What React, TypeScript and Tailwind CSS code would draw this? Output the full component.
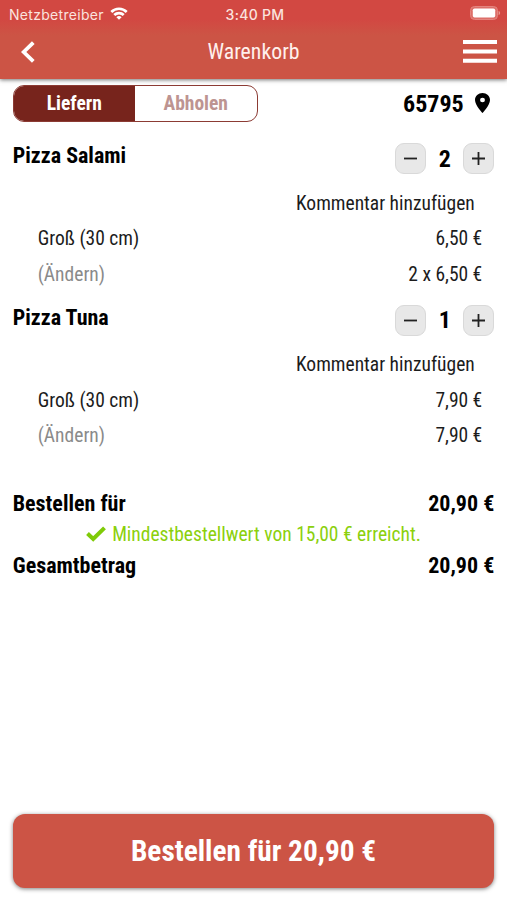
interface CartItem {
  name: string;
  count: number;
  size: string;
  price: string;
  total: string;
}

const items: CartItem[] = [
  { name: 'Pizza Salami', count: 2, size: 'Groß (30 cm)', price: '6,50 €', total: '2 x 6,50 €' },
  { name: 'Pizza Tuna', count: 1, size: 'Groß (30 cm)', price: '7,90 €', total: '7,90 €' },
];

function StatusBar() {
  return (
    <div className="grid grid-cols-3 items-center h-[27px] pl-[9px] pr-[6px] font-['Inter',sans-serif] font-stretch-normal text-[14px] text-[#fbe3df]">
      <div className="flex items-center gap-[6px]">
        <span className="tracking-[0.3px] pt-[1px]">Netzbetreiber</span>
        <svg className="w-[18px] h-[13px] mb-[1px] shrink-0" viewBox="0 0 19 14" fill="none" stroke="white" strokeWidth={2.9}>
          <path d="M1.2 5.3a11.8 11.8 0 0 1 16.6 0" />
          <path d="M4.4 8.7a7.3 7.3 0 0 1 10.2 0" />
          <path d="M9.5 13.8 6.7 11a4 4 0 0 1 5.6 0z" fill="white" stroke="none" />
        </svg>
      </div>
      <span className="text-center font-medium tracking-[0.3px] pt-[1px]">3:40 PM</span>
      <svg className="w-[31px] h-[14px] mb-[1px] justify-self-end" viewBox="0 0 31 14">
        <rect x="0.5" y="0.5" width="27" height="13" rx="4" fill="#dd6f69" stroke="#e4857f" />
        <rect x="2.8" y="2.5" width="22.4" height="9" rx="1.8" fill="white" />
        <path d="M28.6 4.8c2 .8 2 3.6 0 4.4z" fill="#e79c95" />
      </svg>
    </div>
  );
}

function Stepper({ count }: { count: number }) {
  const button = 'flex items-center justify-center w-[31px] h-[31px] rounded-[9px] bg-[#e8e8e8] border border-[#d9d9d9]';
  return (
    <div className="flex items-center">
      <button className={button}>
        <svg className="w-[13px] h-[13px]" viewBox="0 0 13 13" stroke="#222" strokeWidth={1.8}>
          <path d="M0 6.5h13" />
        </svg>
      </button>
      <span className="w-[37px] text-center text-[24px] font-bold">{count}</span>
      <button className={button}>
        <svg className="w-[13px] h-[13px]" viewBox="0 0 13 13" stroke="#222" strokeWidth={1.8}>
          <path d="M0 6.5h13M6.5 0v13" />
        </svg>
      </button>
    </div>
  );
}

function CartEntry({ item }: { item: CartItem }) {
  return (
    <div className="h-[161.5px]">
      <div className="flex justify-between h-[31px]">
        <h2 className="text-[22px] leading-[26px] font-bold">{item.name}</h2>
        <Stepper count={item.count} />
      </div>
      <div className="mt-[11.5px] pl-[25px] pr-[12px] text-[19.5px] leading-[35.5px] text-[#1c1c1c]">
        <div className="text-right pr-[7.5px]">Kommentar hinzufügen</div>
        <div className="flex justify-between">
          <span>{item.size}</span>
          <span>{item.price}</span>
        </div>
        <div className="flex justify-between">
          <span className="text-[#8a8a8a]">(Ändern)</span>
          <span>{item.total}</span>
        </div>
      </div>
    </div>
  );
}

export default function App() {
  return (
    <div className="flex flex-col w-full h-[900px] bg-white text-black font-['Roboto_Condensed','Roboto',sans-serif] font-stretch-condensed">
      <header className="h-[79px] shrink-0 bg-linear-to-b from-[#d24842] from-25% to-[#cc5445] to-45% shadow-[0_1px_4px_rgba(0,0,0,0.55)]">
        <StatusBar />
        <div className="flex items-center justify-between h-[49px] pl-[21px] pr-[10px] text-white">
          <svg className="w-[14px] h-[22px]" viewBox="0 0 14 22" fill="none" stroke="white" strokeWidth={3.8}>
            <path d="M12.3 1.6 2.7 11l9.6 9.4" />
          </svg>
          <h1 className="pl-[9px] pt-[2px] text-[21.8px] text-[#fff0ec]">Warenkorb</h1>
          <svg className="w-[34px] h-[23px]" viewBox="0 0 34 23" fill="white">
            <path d="M0 0h34v4H0zM0 9.5h34v4H0zM0 18.7h34v4H0z" />
          </svg>
        </div>
      </header>

      <main className="flex flex-col flex-1 px-[12.75px] pt-[6px]">
        <div className="flex items-center justify-between h-[37px]">
          <div className="flex w-[245px] h-[37px] rounded-[11px] border border-[#8c3b34] overflow-hidden text-[19.5px] font-bold">
            <button className="w-[121px] pt-[1px] bg-[#77241c] text-white">Liefern</button>
            <button className="flex-1 pt-[1px] text-[#bd9491]">Abholen</button>
          </div>
          <div className="flex items-center gap-[11.5px] pr-[4px]">
            <span className="text-[24px] font-bold">65795</span>
            <svg className="w-[15px] h-[20px] mb-[2px]" viewBox="5 2 14 20" preserveAspectRatio="none">
              <path d="M12 2C8.13 2 5 5.13 5 9c0 5.25 7 13 7 13s7-7.75 7-13c0-3.87-3.13-7-7-7zm0 9.3a2.3 2.3 0 0 1 0-4.6 2.3 2.3 0 0 1 0 4.6z" />
            </svg>
          </div>
        </div>

        <div className="mt-[21px]">
          {items.map(item => (
            <CartEntry key={item.name} item={item} />
          ))}
        </div>

        {/* Totals */}
        <div className="mt-[21.5px] text-[22px] leading-[31px] font-bold">
          <div className="flex justify-between">
            <span>Bestellen für</span>
            <span>20,90 €</span>
          </div>
          <div className="flex items-center justify-center gap-[6px] text-[19.5px] font-normal text-[#8bd00c]">
            <svg className="w-[20px] h-[16px]" viewBox="0 0 20 16" fill="none" stroke="#7fcb08" strokeWidth={4}>
              <path d="M1.5 7.5 7.2 13 18.5 1.8" />
            </svg>
            <span>Mindestbestellwert von 15,00 € erreicht.</span>
          </div>
          <div className="flex justify-between">
            <span>Gesamtbetrag</span>
            <span>20,90 €</span>
          </div>
        </div>

        <button className="mt-auto mb-[12px] h-[74px] pt-[1px] rounded-[12px] bg-[#cc5445] text-white text-[29.3px] font-bold shadow-[0_1px_4px_rgba(0,0,0,0.5)]">
          Bestellen für 20,90 €
        </button>
      </main>
    </div>
  );
}
